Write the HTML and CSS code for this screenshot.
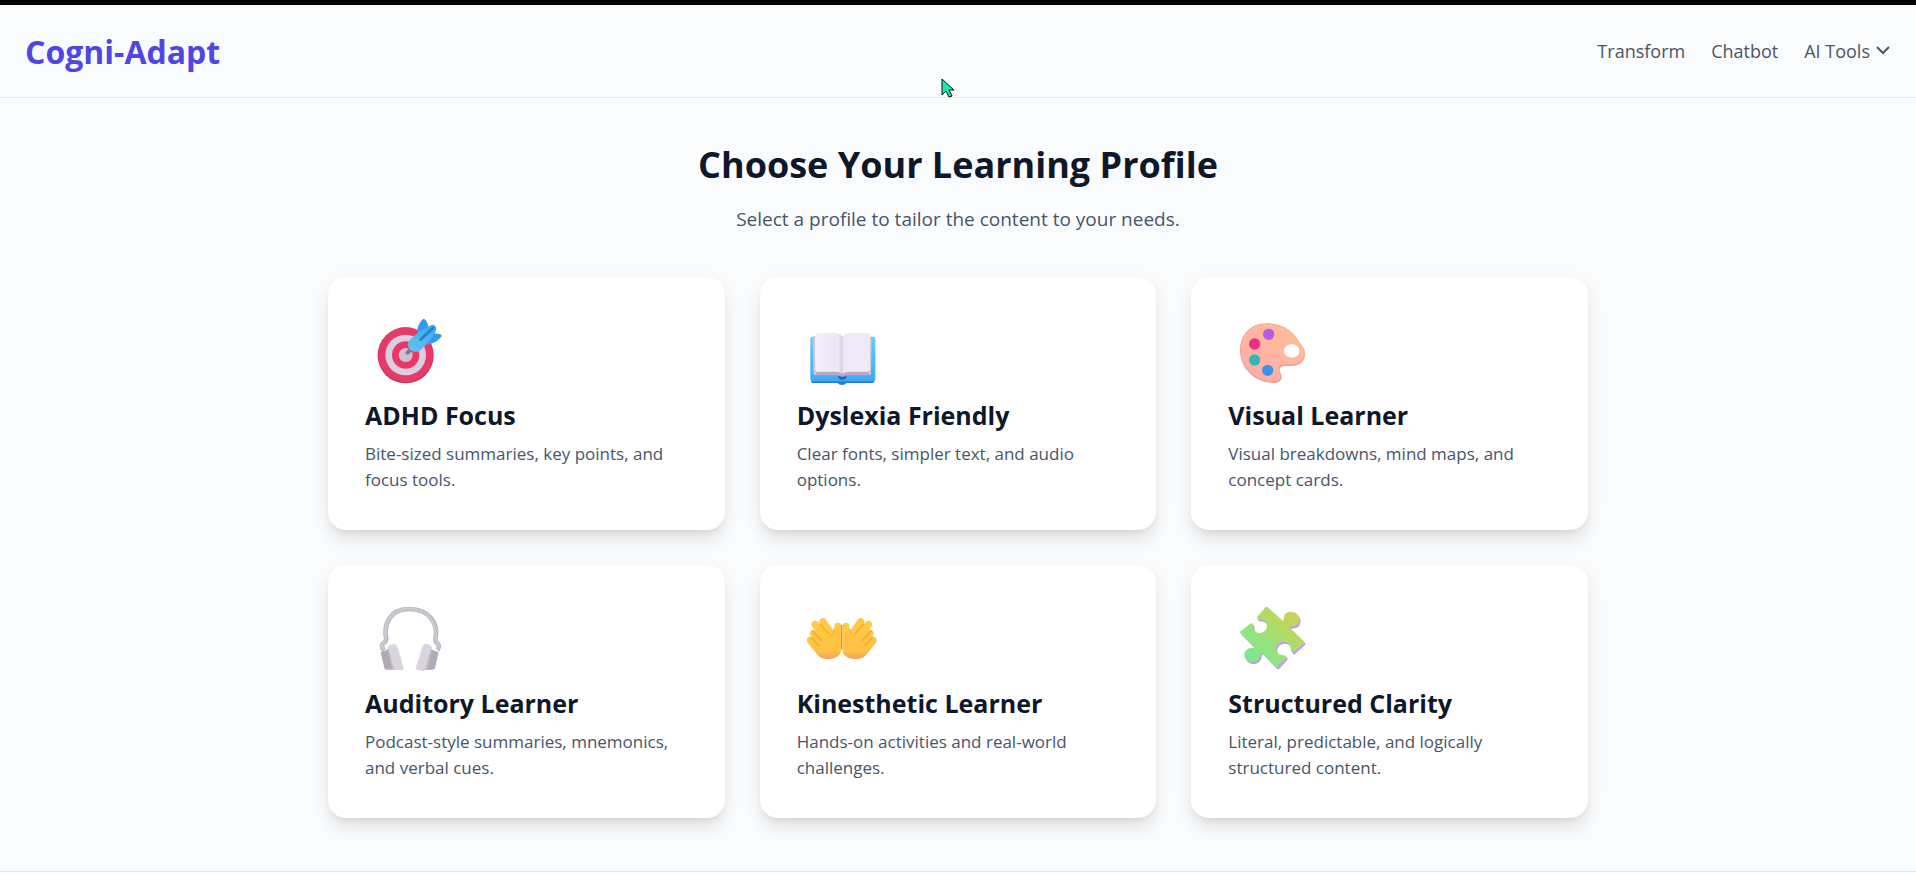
FILE: index.html
```html
<!DOCTYPE html>
<html lang="en">
<head>
    <meta charset="UTF-8">
    <meta name="viewport" content="width=device-width, initial-scale=1.0">
    <title>Cogni-Adapt</title>
    <link rel="stylesheet" href="styles.css">
</head>
<body>
    <header class="site-header">
        <a class="logo" href="#">Cogni-Adapt</a>
        <nav class="main-nav">
            <a href="#transform">Transform</a>
            <a href="#chatbot">Chatbot</a>
            <button type="button" class="nav-menu" aria-haspopup="true">
                AI Tools
                <svg class="chevron" viewBox="0 0 14 14" aria-hidden="true"><path d="M1 3l6 6 6-6"/></svg>
            </button>
        </nav>
    </header>

    <main>
        <h1>Choose Your Learning Profile</h1>
        <p class="subtitle">Select a profile to tailor the content to your needs.</p>

        <section class="profiles">
            <button type="button" class="card">
                <svg class="icon" viewBox="18 42 264 231" aria-hidden="true">
                    <defs>
                        <linearGradient id="dart" x1="0" y1="1" x2="1" y2="0">
                            <stop offset="0" stop-color="#62c8ee"/>
                            <stop offset="1" stop-color="#38a4ee"/>
                        </linearGradient>
                    </defs>
                    <circle cx="140" cy="166" r="84" fill="#c92e5c"/>
                    <circle cx="140" cy="164" r="82" fill="#e63a69"/>
                    <circle cx="140" cy="165" r="61" fill="#d9cfe2"/>
                    <circle cx="140" cy="165" r="41" fill="#ea3767"/>
                    <circle cx="140" cy="165" r="21" fill="#d0c0d6"/>
                    <path d="m146 158 16-16" stroke="#8a7190" stroke-width="12" stroke-linecap="round"/>
                    <path d="M175 100c-3-13 7-37 19-44 8 3 14 16 14 26l-8 48zM196 130l27-29c10-2 22 0 26 6-8 13-26 24-40 25z" fill="#3398ee"/>
                    <path d="M147 131c0-8 22-27 39-40l30-15c10-3 18 4 15 14-6 22-29 45-49 62-16 10-36-3-35-21z" fill="url(#dart)"/>
                    <path d="m184 119 38-35" stroke="#2380cf" stroke-width="8" stroke-linecap="round"/>
                </svg>
                <span class="card-title">ADHD Focus</span>
                <span class="card-text">Bite-sized summaries, key points, and focus tools.</span>
            </button>

            <button type="button" class="card">
                <svg class="icon" viewBox="24 42 264 231" aria-hidden="true">
                    <defs>
                        <linearGradient id="page" x1="0" x2="1">
                            <stop offset="0" stop-color="#f4f0fa"/>
                            <stop offset=".85" stop-color="#ece6f5"/>
                            <stop offset="1" stop-color="#d6cce0"/>
                        </linearGradient>
                        <linearGradient id="cover" x1="0" y1="0" x2="0" y2="1">
                            <stop offset="0" stop-color="#62cef8"/>
                            <stop offset="1" stop-color="#3ca9f2"/>
                        </linearGradient>
                    </defs>
                    <path d="M66 234h191v8q-1 7-8 7h-77c-4 8-22 8-26 0H74q-8 0-8-7z" fill="#2a7fcb"/>
                    <path d="M70 110h182q7 0 7 8v118q0 8-8 8H72q-8 0-8-8V118q0-8 6-8z" fill="url(#cover)"/>
                    <path d="M147 229h26c0 14-26 14-26 0z" fill="#1b69ae"/>
                    <path d="m74 109 3 112q0 5 6 5h65l12 5 12-5h67q6 0 6-5l2-107z" fill="#b9abc7"/>
                    <path d="M77 108q2-9 14-9h47q18 0 23 12v110q-7-6-20-6H83q-5 0-5-5z" fill="url(#page)"/>
                    <path d="M161 111q6-12 24-12h47q11 0 13 10v101q0 5-6 5h-58q-13 0-20 6z" fill="#efe9f7"/>
                    <path d="m77 108-6 7 2 106q3 4 9 4l1-10-4-5zm167 2 4 4-2 107q-2 4-7 4v-10l4-5z" fill="#cfc4d7"/>
                </svg>
                <span class="card-title">Dyslexia Friendly</span>
                <span class="card-text">Clear fonts, simpler text, and audio options.</span>
            </button>

            <button type="button" class="card">
                <svg class="icon" viewBox="30 42 264 231" aria-hidden="true">
                    <defs>
                        <linearGradient id="palette" x1="1" y1="0" x2="0" y2="1">
                            <stop offset="0" stop-color="#ffbf99"/>
                            <stop offset="1" stop-color="#ffaba8"/>
                        </linearGradient>
                    </defs>
                    <path fill-rule="evenodd" d="M66 151c0-48 34-81 79-81 39 0 74 17 91 44 12 19 25 29 25 48 0 24-17 36-42 36-18 0-34-1-34 11 0 11 6 12 6 22 0 13-12 19-28 18-54-3-97-44-97-98zm131 2a24 21 0 1 0 48 0a24 21 0 1 0-48 0z" fill="#eda092"/>
                    <path fill-rule="evenodd" d="M68 147c0-44 35-75 77-75 40 0 76 17 91 43 12 18 24 28 24 44 0 23-18 34-43 34-19 0-36 0-36 12 0 13 7 15 7 23 0 12-11 17-25 16-52-3-95-44-95-97zm129 6a24 21 0 1 0 48 0a24 21 0 1 0-48 0z" fill="url(#palette)"/>
                    <circle cx="152" cy="103" r="17" fill="#b65ae8"/>
                    <circle cx="110" cy="132" r="17" fill="#ec2e82"/>
                    <circle cx="110" cy="180" r="17" fill="#35b6b5"/>
                    <circle cx="149" cy="211" r="17" fill="#3b91ec"/>
                </svg>
                <span class="card-title">Visual Learner</span>
                <span class="card-text">Visual breakdowns, mind maps, and concept cards.</span>
            </button>

            <button type="button" class="card">
                <svg class="icon" viewBox="18 39 264 231" aria-hidden="true">
                    <path d="M75 184c-9-10-8-20 3-25l4-9c-9-40 8-90 68-90s90 44 79 90l2 10c9 5 12 13 4 23" fill="none" stroke="#b8b4bc" stroke-width="14" stroke-linejoin="round"/>
                    <path d="M74 181c-9-9-6-18 3-23l4-10c-8-40 12-89 68-89s89 43 80 89l3 11c8 5 10 12 2 21" fill="none" stroke="#cbc7ce" stroke-width="9" stroke-linejoin="round"/>
                    <path d="m65 190 24-10 17 62H83q-5 0-7-5zM239 190l-25-10-16 62h23q6 0 7-5z" fill="#b0abb5"/>
                    <path d="M87 176q0-6 6-8l10-3q9-2 12 8l18 60q2 9-6 11h-20zM218 176q0-6-6-9l-10-3q-8-1-11 8l-20 62q-2 8 6 10l19 3z" fill="#d9d5df"/>
                    <path d="m87 175 19 67-6-1-13-53zm131 1-20 66 8-1 12-53z" fill="#c1bcc8"/>
                </svg>
                <span class="card-title">Auditory Learner</span>
                <span class="card-text">Podcast-style summaries, mnemonics, and verbal cues.</span>
            </button>

            <button type="button" class="card">
                <svg class="icon" viewBox="24 39 264 231" aria-hidden="true">
                    <defs>
                        <linearGradient id="skin" x1="0" y1="0" x2="0" y2="1">
                            <stop offset="0" stop-color="#ffcb42"/>
                            <stop offset=".8" stop-color="#ffc146"/>
                            <stop offset="1" stop-color="#f5a05a"/>
                        </linearGradient>
                        <g id="hand">
                            <path d="M157 110v71c0 18-15 29-39 29-16 0-24-4-33-13l-29-36c-7-11 4-22 13-16-14-14-2-28 10-20l-10-13c-6-15 10-23 19-12l6 6c-10-13 6-26 16-15l22 31c2 3 4 1 4-3v-9c0-12 21-12 21 0z" fill="url(#skin)"/>
                            <path d="m94 106 25 28M71 126l27 29M66 145l23 25" fill="none" stroke="#f0a733" stroke-width="4" stroke-linecap="round"/>
                            <path d="M136 119c-1 15-9 21-18 24" fill="none" stroke="#f4b23b" stroke-width="3" stroke-linecap="round"/>
                        </g>
                    </defs>
                    <use href="#hand"/>
                    <use href="#hand" transform="matrix(-1 0 0 1 317 0)"/>
                    <path d="M158 108v73" stroke="#cf8422" stroke-width="3"/>
                </svg>
                <span class="card-title">Kinesthetic Learner</span>
                <span class="card-text">Hands-on activities and real-world challenges.</span>
            </button>

            <button type="button" class="card">
                <svg class="icon" viewBox="30 39 264 231" aria-hidden="true">
                    <defs>
                        <linearGradient id="puzzle" x1="0" y1="1" x2="1" y2="0">
                            <stop offset="0" stop-color="#68ef9d"/>
                            <stop offset=".5" stop-color="#a1df71"/>
                            <stop offset="1" stop-color="#ddcc4c"/>
                        </linearGradient>
                        <path id="piece" d="m67 128 29-24q6-4 10 2c-2 18 7 26 20 26 17-1 25-18 18-31-5-8-15-11-23-9-5-2-5-8-1-11l21-25q5-5 10 0l44 40c5-4 0-15 7-22 9-8 25-8 34 0 11 9 9 25 2 32-8 9-19 5-24 9l42 40q4 4 1 8l-29 25q-6 4-9-2c0-19-10-28-22-28-18 1-28 15-21 29 3 9 12 12 25 12 5 2 5 5 1 10l-22 24q-5 4-9-1l-40-42c-5 3-2 14-10 22-10 9-25 10-35 1-10-8-9-22-1-30 9-8 19-3 25-8l-42-42q-4-4-1-9z"/>
                    </defs>
                    <use href="#piece" x="4" y="6" fill="#c29df0"/>
                    <use href="#piece" fill="url(#puzzle)"/>
                </svg>
                <span class="card-title">Structured Clarity</span>
                <span class="card-text">Literal, predictable, and logically structured content.</span>
            </button>
        </section>
    </main>

    <footer class="site-footer"></footer>

    <svg class="pointer" viewBox="0 0 14 20" aria-hidden="true"><path d="M1 1v16l4-4 3 6 3-1-3-6h5z"/></svg>
</body>
</html>
```
FILE: styles.css
```css
* {
    box-sizing: border-box;
}

body {
    margin: 0;
    border-top: 5px solid #000;
    font-family: 'Segoe UI', 'Open Sans', sans-serif;
    background: #fafbfd;
    color: #0f172a;
}

button {
    font-family: inherit;
    border: none;
    background: none;
    cursor: pointer;
}

/* Header */
.site-header {
    display: flex;
    align-items: center;
    justify-content: space-between;
    min-height: 93px;
    padding: 0 26px 0 25px;
    border-bottom: 1px solid #e5e7eb;
}

.logo {
    font-size: 32px;
    font-weight: 700;
    color: #4f46e5;
    text-decoration: none;
}

.main-nav {
    display: flex;
    align-items: center;
    gap: 26px;
}

.main-nav a,
.nav-menu {
    padding: 0;
    font-size: 18px;
    line-height: 30px;
    color: #4b5563;
    text-decoration: none;
}

.nav-menu {
    display: flex;
    align-items: center;
    gap: 6px;
}

.chevron {
    width: 14px;
    height: 14px;
    fill: none;
    stroke: #4b5563;
    stroke-width: 2;
}

/* Profile picker */
main {
    max-width: 1330px;
    margin: 0 auto;
    padding: 43px 35px 53px;
    text-align: center;
}

h1 {
    margin: 0;
    font-size: 36px;
    line-height: 48px;
    font-weight: 700;
}

.subtitle {
    margin: 15px 0 43px;
    font-size: 19px;
    line-height: 30px;
    color: #475569;
}

.profiles {
    display: grid;
    grid-template-columns: repeat(3, 1fr);
    gap: 35px;
}

.card {
    display: flex;
    flex-direction: column;
    align-items: flex-start;
    padding: 37px;
    border-radius: 18px;
    background: #fff;
    box-shadow: 0 11px 17px -3px rgba(0, 0, 0, 0.1), 0 4px 7px -4px rgba(0, 0, 0, 0.1), 0 4px 24px rgba(0, 0, 0, 0.03);
    text-align: left;
}

.icon {
    width: 88px;
    height: 77px;
    margin-bottom: 7px;
}

.card-title {
    margin-bottom: 8px;
    font-size: 25px;
    line-height: 35px;
    font-weight: 700;
    color: #0f172a;
}

.card-text {
    font-size: 17px;
    line-height: 26px;
    color: #475569;
}

.site-footer {
    border-top: 1px solid #e5e7eb;
}

.pointer {
    position: absolute;
    top: 78px;
    left: 50%;
    width: 14px;
    height: 20px;
    margin-left: -17px;
    fill: #16e8b4;
    stroke: #111;
    pointer-events: none;
}

@media (max-width: 1000px) {
    .profiles {
        grid-template-columns: repeat(2, 1fr);
    }
}

@media (max-width: 640px) {
    .profiles {
        grid-template-columns: 1fr;
    }
}
```
